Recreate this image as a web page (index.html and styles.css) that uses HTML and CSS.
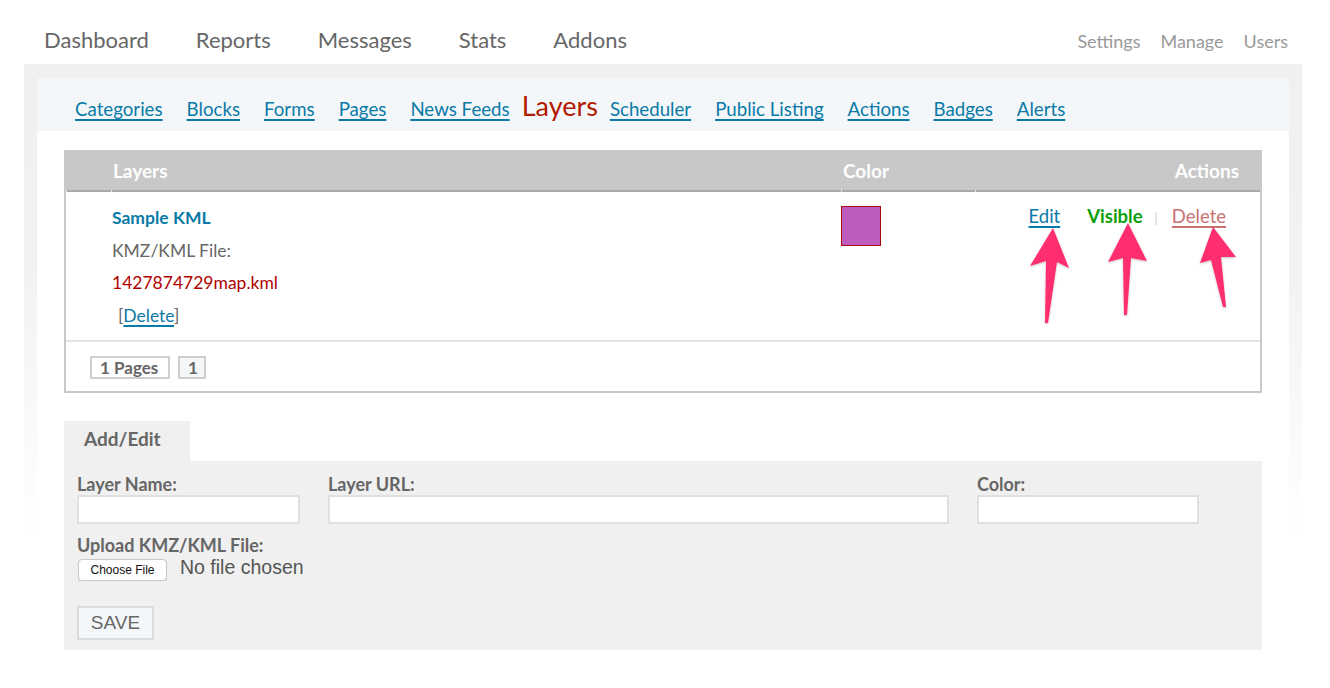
FILE: index.html
```html
<!DOCTYPE html>
<html>
<head>
<meta charset="utf-8">
<title>Layers</title>
<link rel="stylesheet" href="styles.css">
</head>
<body>
<header class="topbar">
  <nav class="mainnav">
    <a href="#">Dashboard</a>
    <a href="#">Reports</a>
    <a href="#">Messages</a>
    <a href="#">Stats</a>
    <a href="#">Addons</a>
  </nav>
  <nav class="usernav">
    <a href="#">Settings</a>
    <a href="#">Manage</a>
    <a href="#">Users</a>
  </nav>
</header>

<div class="shell">
  <div class="panel">
    <nav class="subnav">
      <a href="#">Categories</a>
      <a href="#">Blocks</a>
      <a href="#">Forms</a>
      <a href="#">Pages</a>
      <a href="#">News Feeds</a>
      <span class="current">Layers</span>
      <a href="#">Scheduler</a>
      <a href="#">Public Listing</a>
      <a href="#">Actions</a>
      <a href="#">Badges</a>
      <a href="#">Alerts</a>
    </nav>

    <div class="content">
      <div class="tablebox">
        <table class="grid">
          <thead>
            <tr>
              <th class="c-pad"></th>
              <th class="c-name">Layers</th>
              <th class="c-color">Color</th>
              <th class="c-actions">Actions</th>
            </tr>
          </thead>
          <tbody>
            <tr class="row">
              <td class="c-pad"></td>
              <td class="c-name">
                <div class="layer-title">Sample KML</div>
                <div class="muted">KMZ/KML File:</div>
                <div class="filename">1427874729map.kml</div>
                <div class="muted del">[<a href="#">Delete</a>]</div>
              </td>
              <td class="c-color"><span class="swatch"></span></td>
              <td class="c-actions">
                <div class="actions">
                  <a href="#" class="act-edit">Edit</a>
                  <span class="act-visible">Visible</span>
                  <span class="act-sep">|</span>
                  <a href="#" class="act-delete">Delete</a>
                </div>
                <svg class="arrows" width="225" height="110" viewBox="1020 215 225 110">
                  <defs>
                    <filter id="sh" x="-20%" y="-20%" width="140%" height="140%">
                      <feDropShadow dx="0" dy="1" stdDeviation="1" flood-color="#000" flood-opacity="0.25"/>
                    </filter>
                  </defs>
                  <g fill="#ff2d6e" filter="url(#sh)">
                    <polygon points="1053,228 1069,268 1057,262 1048,323 1045,323 1046,261 1030,266"/>
                    <polygon points="1128,223 1147,261 1131,258 1127,315 1124,315 1123,258 1108,262"/>
                    <polygon points="1213,227 1236,257 1221,257 1226,307 1223,307 1211,260 1200,263"/>
                  </g>
                </svg>
              </td>
            </tr>
            <tr class="foot">
              <td colspan="4">
                <div class="pager">
                  <span class="pg-total">1 Pages</span>
                  <span class="pg-num">1</span>
                </div>
              </td>
            </tr>
          </tbody>
        </table>
      </div>

      <div class="editor">
        <div class="tab">Add/Edit</div>
        <form class="form">
          <div class="fields">
            <label class="field f-name">
              <span class="lbl">Layer Name:</span>
              <input type="text" class="txt">
            </label>
            <label class="field f-url">
              <span class="lbl">Layer URL:</span>
              <input type="text" class="txt">
            </label>
            <label class="field f-color">
              <span class="lbl">Color:</span>
              <input type="text" class="txt">
            </label>
          </div>
          <div class="upload">
            <span class="lbl">Upload KMZ/KML File:</span>
            <input type="file" class="file">
          </div>
          <button type="button" class="save">SAVE</button>
        </form>
      </div>
    </div>
  </div>
</div>
</body>
</html>
```

FILE: styles.css
```css
* { box-sizing: border-box; }

html, body {
  margin: 0;
  padding: 0;
  background: #fff;
  font-family: Lato, "Open Sans", sans-serif;
  color: #666;
}

a { text-decoration: none; }

/* top bar */
.topbar {
  height: 64px;
  display: flex;
  justify-content: space-between;
  align-items: flex-start;
  padding: 26px 42px 0 44px;
}
.mainnav {
  display: flex;
  gap: 47px;
}
.mainnav a {
  font-size: 22px;
  line-height: 28px;
  color: #666;
}
.usernav {
  display: flex;
  gap: 20px;
  padding-top: 3px;
}
.usernav a {
  font-size: 18px;
  line-height: 24px;
  color: #999;
}

/* shell */
.shell {
  margin: 0 28px 0 24px;
  padding: 14px 13px 0;
  background: linear-gradient(#f0f0f0 0px, #f2f2f2 200px, #fff 470px);
}
.panel {
  background: #fff;
}

/* sub navigation */
.subnav {
  height: 53px;
  background: #f4f7fa;
  display: flex;
  align-items: baseline;
  padding: 14px 0 0 38px;
}
.subnav a {
  font-size: 18.7px;
  line-height: 28px;
  color: #0a7aa6;
  text-decoration: underline;
  text-decoration-thickness: 2px;
  text-underline-offset: 3px;
  margin-right: 24px;
}
.subnav a:nth-child(5) { margin-right: 12px; }
.subnav .current {
  font-size: 27px;
  line-height: 28px;
  color: #b31a00;
  margin-right: 12px;
}

/* content */
.content {
  padding: 19px 27px 40px;
}

.tablebox {
  border: 2px solid #c8c8c8;
  border-top: 0;
}
.grid {
  width: 100%;
  border-collapse: separate;
  border-spacing: 0;
}
.grid th {
  height: 42px;
  padding: 0 0 2px;
  color: #fff;
  font-size: 19px;
  font-weight: 700;
  text-align: left;
  background:
    linear-gradient(#e6e6e6, #e6e6e6) 0 100% / 1px 2px no-repeat,
    linear-gradient(#a9a9a9, #a9a9a9) 1px 100% / calc(100% - 1px) 2px no-repeat,
    #c8c8c8;
}
.grid .c-pad { width: 45px; }
.grid th.c-name { padding-left: 2px; }
.grid .c-color { width: 134px; }
.grid th.c-color { padding-left: 2px; }
.grid .c-actions { width: 285px; }
.grid th.c-actions { text-align: right; padding-right: 21px; }

.grid td { vertical-align: top; }
.row td {
  padding-top: 10px;
  padding-bottom: 8px;
  border-bottom: 2px solid #e3e3e3;
}
.row .c-name div {
  font-size: 17.5px;
  line-height: 32.6px;
}
.layer-title {
  color: #0a7aa6;
  font-weight: 700;
}
.muted { color: #666; }
.filename { color: #b00000; }
.del { padding-left: 6px; }
.del a {
  color: #0a7aa6;
  text-decoration: underline;
  text-decoration-thickness: 2px;
  text-underline-offset: 3px;
}

.row td.c-color { padding-top: 14px; }
.swatch {
  display: block;
  width: 40px;
  height: 40px;
  background: #bd5cbc;
  border: 1px solid #a60a0a;
  margin-left: -1px;
}

.row td.c-actions {
  position: relative;
  padding-top: 12px;
}
.actions {
  display: flex;
  justify-content: flex-end;
  align-items: baseline;
  padding-right: 33px;
  font-size: 18.5px;
  line-height: 24px;
}
.act-edit {
  color: #0a7aa6;
  text-decoration: underline;
  text-decoration-thickness: 2px;
  text-underline-offset: 3px;
  margin-right: 27px;
}
.act-visible {
  color: #0aa00a;
  font-weight: 700;
}
.act-sep {
  color: #ccc;
  font-size: 13px;
  margin: 0 14px 0 12px;
}
.act-delete {
  color: #c87272;
  text-decoration: underline;
  text-decoration-thickness: 2px;
  text-underline-offset: 3px;
}
.arrows {
  position: absolute;
  left: 45px;
  top: 23px;
  overflow: visible;
}

.foot td {
  height: 49px;
  padding: 14px 0 0 24px;
}
.pager {
  display: flex;
  gap: 8px;
}
.pager span {
  display: block;
  height: 23px;
  border: 2px solid #cfcfcf;
  font-size: 17px;
  line-height: 19px;
  font-weight: 700;
  color: #666;
  padding: 0 8px;
}
.pager .pg-total { width: 80px; background: #fff; }
.pager .pg-num { width: 28px; background: #f4f7fa; }

/* editor */
.editor {
  margin-top: 28px;
}
.tab {
  display: inline-block;
  width: 126px;
  height: 40px;
  background: #f0f0f0;
  font-size: 19px;
  font-weight: 700;
  line-height: 36px;
  padding-left: 20px;
  color: #666;
  vertical-align: top;
}
.form {
  background: #f0f0f0;
  padding: 12px 13px 10px;
  margin: 0;
}
.fields {
  display: flex;
  gap: 28px;
}
.field {
  display: flex;
  flex-direction: column;
}
.f-name { width: 223px; }
.f-url { width: 621px; }
.f-color { width: 222px; }
.lbl {
  display: block;
  font-size: 18px;
  font-weight: 700;
  line-height: 22px;
  color: #666;
}
.txt {
  height: 29px;
  border: 2px solid #e0e0e0;
  background: #fff;
  margin: 0;
  padding: 0 4px;
}
.upload {
  margin-top: 10px;
}
.file {
  font-family: "Liberation Sans", Arial, sans-serif;
  font-size: 19.5px;
  color: #555;
  margin: 0 0 0 1px;
}
.file::file-selector-button {
  font-family: "Liberation Sans", Arial, sans-serif;
  font-size: 12px;
  color: #111;
  background: #fff;
  border: 1px solid #c8c8c8;
  border-radius: 4px;
  height: 22px;
  width: 89px;
  padding: 0;
  margin-right: 13px;
  box-shadow: 0 1px 1px rgba(0,0,0,0.15);
}
.save {
  display: block;
  margin-top: 25px;
  width: 77px;
  height: 34px;
  background: #f4f7fa;
  border: 2px solid #dcdcdc;
  font-family: "Liberation Sans", Arial, sans-serif;
  font-size: 19px;
  color: #666;
  padding: 0;
}
```
